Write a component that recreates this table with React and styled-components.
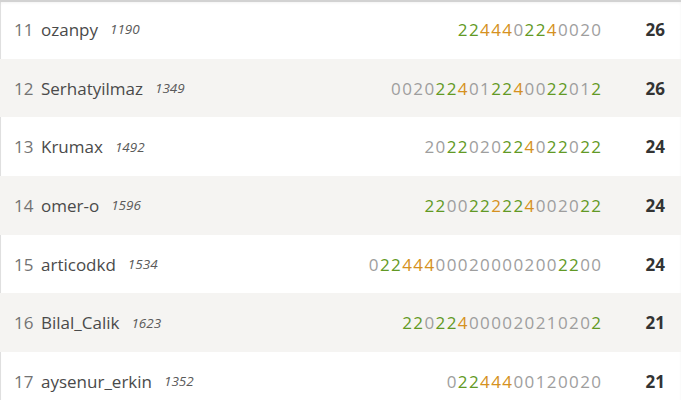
import React from "react";
import styled, { createGlobalStyle } from "styled-components";

const GlobalStyle = createGlobalStyle`
  body {
    margin: 0;
    background: #ffffff;
    font-family: "Open Sans", "Noto Sans", sans-serif;
  }
`;

const COLORS = {
  g: "#629924",
  o: "#d59120",
  n: "#9e9e9e",
};

const players = [
  { rank: 11, name: "ozanpy", rating: 1190, sheet: "2244402240020", marks: "ggooonggonnnn", score: 26 },
  { rank: 12, name: "Serhatyilmaz", rating: 1349, sheet: "0020224012240022012", marks: "nnnnggonnggonnggnng", score: 26 },
  { rank: 13, name: "Krumax", rating: 1492, sheet: "2022020224022022", marks: "nnggnnnggonggngg", score: 24 },
  { rank: 14, name: "omer-o", rating: 1596, sheet: "2200222224002022", marks: "ggnnggoggonnnngg", score: 24 },
  { rank: 15, name: "articodkd", rating: 1534, sheet: "022444000200002002200", marks: "nggooonnnnnnnnnnnggnn", score: 24 },
  { rank: 16, name: "Bilal_Calik", rating: 1623, sheet: "220224000020210202", marks: "ggnggonnnnnnnnnnng", score: 21 },
  { rank: 17, name: "aysenur_erkin", rating: 1352, sheet: "02244400120020", marks: "nggooonnnnnnnn", score: 21 },
];

// top/left edges drawn as inset shadows so they don't push the rows down
const Standings = styled.div`
  background: #ffffff;
  box-shadow: inset 0 2px 0 #d2d2d2, inset 0 3px 3px rgba(0, 0, 0, 0.05),
    inset 1px 0 0 #e3e3e3;
`;

const Row = styled.div`
  display: flex;
  align-items: center;
  height: 58.7px;
  background: ${(p) => (p.$zebra ? "#f5f4f2" : "transparent")};
`;

const Rank = styled.span`
  flex: 0 0 auto;
  width: 27px;
  padding-left: 14px;
  font-size: 17px;
  color: #737373;
`;

const Name = styled.span`
  font-size: 17px;
  color: #4a4a4a;
`;

const Rating = styled.em`
  margin-left: 12px;
  font-size: 13.5px;
  color: #5a5a5a;
`;

const Sheet = styled.span`
  margin-left: auto;
  font-size: 17px;
  letter-spacing: 1.4px;
  margin-right: -1.4px;
`;

const Digit = styled.span`
  color: ${(p) => COLORS[p.$kind]};
`;

const Score = styled.strong`
  flex: 0 0 80px;
  box-sizing: border-box;
  padding-right: 16px;
  text-align: right;
  font-size: 17px;
  font-weight: 700;
  color: #333333;
`;

export default function App() {
  return (
    <>
      <GlobalStyle />
      <Standings>
        {players.map((p, i) => (
          <Row key={p.rank} $zebra={i % 2 === 1}>
            <Rank>{p.rank}</Rank>
            <Name>{p.name}</Name>
            <Rating>{p.rating}</Rating>
            <Sheet>
              {p.sheet.split("").map((d, j) => (
                <Digit key={j} $kind={p.marks[j]}>
                  {d}
                </Digit>
              ))}
            </Sheet>
            <Score>{p.score}</Score>
          </Row>
        ))}
      </Standings>
    </>
  );
}
